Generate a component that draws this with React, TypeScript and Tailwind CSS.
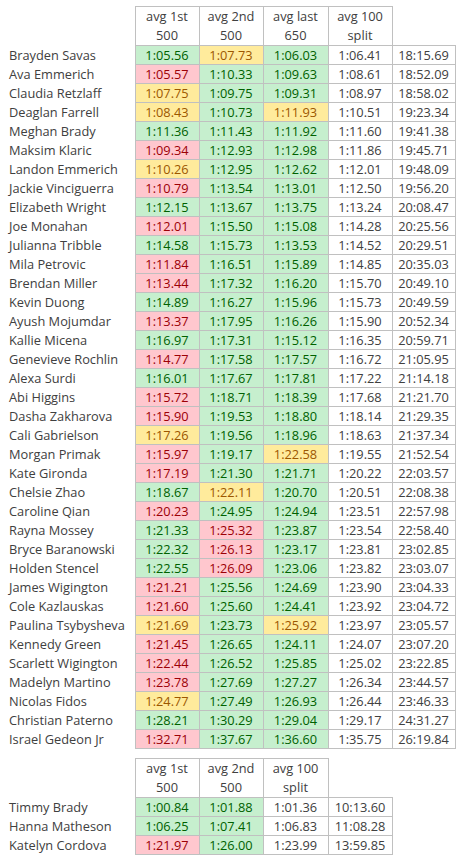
type Tone = 'g' | 'y' | 'r'

const tones: Record<Tone, string> = {
  g: 'bg-[#c6efce] text-[#006100]',
  y: 'bg-[#ffeb9c] text-[#9c5700]',
  r: 'bg-[#ffc7ce] text-[#9c0006]',
}

// name, [time, tone] x3, avg split, final
const mainRows: [string, string, Tone, string, Tone, string, Tone, string, string][] = [
  ['Brayden Savas', '1:05.56', 'g', '1:07.73', 'y', '1:06.03', 'g', '1:06.41', '18:15.69'],
  ['Ava Emmerich', '1:05.57', 'r', '1:10.33', 'g', '1:09.63', 'g', '1:08.61', '18:52.09'],
  ['Claudia Retzlaff', '1:07.75', 'y', '1:09.75', 'g', '1:09.31', 'g', '1:08.97', '18:58.02'],
  ['Deaglan Farrell', '1:08.43', 'y', '1:10.73', 'g', '1:11.93', 'y', '1:10.51', '19:23.34'],
  ['Meghan Brady', '1:11.36', 'g', '1:11.43', 'g', '1:11.92', 'g', '1:11.60', '19:41.38'],
  ['Maksim Klaric', '1:09.34', 'r', '1:12.93', 'g', '1:12.98', 'g', '1:11.86', '19:45.71'],
  ['Landon Emmerich', '1:10.26', 'y', '1:12.95', 'g', '1:12.62', 'g', '1:12.01', '19:48.09'],
  ['Jackie Vinciguerra', '1:10.79', 'r', '1:13.54', 'g', '1:13.01', 'g', '1:12.50', '19:56.20'],
  ['Elizabeth Wright', '1:12.15', 'g', '1:13.67', 'g', '1:13.75', 'g', '1:13.24', '20:08.47'],
  ['Joe Monahan', '1:12.01', 'r', '1:15.50', 'g', '1:15.08', 'g', '1:14.28', '20:25.56'],
  ['Julianna Tribble', '1:14.58', 'g', '1:15.73', 'g', '1:13.53', 'g', '1:14.52', '20:29.51'],
  ['Mila Petrovic', '1:11.84', 'r', '1:16.51', 'g', '1:15.89', 'g', '1:14.85', '20:35.03'],
  ['Brendan Miller', '1:13.44', 'r', '1:17.32', 'g', '1:16.20', 'g', '1:15.70', '20:49.10'],
  ['Kevin Duong', '1:14.89', 'g', '1:16.27', 'g', '1:15.96', 'g', '1:15.73', '20:49.59'],
  ['Ayush Mojumdar', '1:13.37', 'r', '1:17.95', 'g', '1:16.26', 'g', '1:15.90', '20:52.34'],
  ['Kallie Micena', '1:16.97', 'g', '1:17.31', 'g', '1:15.12', 'g', '1:16.35', '20:59.71'],
  ['Genevieve Rochlin', '1:14.77', 'r', '1:17.58', 'g', '1:17.57', 'g', '1:16.72', '21:05.95'],
  ['Alexa Surdi', '1:16.01', 'g', '1:17.67', 'g', '1:17.81', 'g', '1:17.22', '21:14.18'],
  ['Abi Higgins', '1:15.72', 'r', '1:18.71', 'g', '1:18.39', 'g', '1:17.68', '21:21.70'],
  ['Dasha Zakharova', '1:15.90', 'r', '1:19.53', 'g', '1:18.80', 'g', '1:18.14', '21:29.35'],
  ['Cali Gabrielson', '1:17.26', 'y', '1:19.56', 'g', '1:18.96', 'g', '1:18.63', '21:37.34'],
  ['Morgan Primak', '1:15.97', 'r', '1:19.17', 'g', '1:22.58', 'y', '1:19.55', '21:52.54'],
  ['Kate Gironda', '1:17.19', 'r', '1:21.30', 'g', '1:21.71', 'g', '1:20.22', '22:03.57'],
  ['Chelsie Zhao', '1:18.67', 'g', '1:22.11', 'y', '1:20.70', 'g', '1:20.51', '22:08.38'],
  ['Caroline Qian', '1:20.23', 'r', '1:24.95', 'g', '1:24.94', 'g', '1:23.51', '22:57.98'],
  ['Rayna Mossey', '1:21.33', 'g', '1:25.32', 'r', '1:23.87', 'g', '1:23.54', '22:58.40'],
  ['Bryce Baranowski', '1:22.32', 'g', '1:26.13', 'r', '1:23.17', 'g', '1:23.81', '23:02.85'],
  ['Holden Stencel', '1:22.55', 'g', '1:26.09', 'r', '1:23.06', 'g', '1:23.82', '23:03.07'],
  ['James Wigington', '1:21.21', 'r', '1:25.56', 'g', '1:24.69', 'g', '1:23.90', '23:04.33'],
  ['Cole Kazlauskas', '1:21.60', 'r', '1:25.60', 'g', '1:24.41', 'g', '1:23.92', '23:04.72'],
  ['Paulina Tsybysheva', '1:21.69', 'y', '1:23.73', 'g', '1:25.92', 'y', '1:23.97', '23:05.57'],
  ['Kennedy Green', '1:21.45', 'r', '1:26.65', 'g', '1:24.11', 'g', '1:24.07', '23:07.20'],
  ['Scarlett Wigington', '1:22.44', 'r', '1:26.52', 'g', '1:25.85', 'g', '1:25.02', '23:22.85'],
  ['Madelyn Martino', '1:23.78', 'r', '1:27.69', 'g', '1:27.27', 'g', '1:26.34', '23:44.57'],
  ['Nicolas Fidos', '1:24.77', 'y', '1:27.49', 'g', '1:26.93', 'g', '1:26.44', '23:46.33'],
  ['Christian Paterno', '1:28.21', 'g', '1:30.29', 'g', '1:29.04', 'g', '1:29.17', '24:31.27'],
  ['Israel Gedeon Jr', '1:32.71', 'r', '1:37.67', 'g', '1:36.60', 'g', '1:35.75', '26:19.84'],
]

const shortRows: [string, string, Tone, string, Tone, string, string][] = [
  ['Timmy Brady', '1:00.84', 'g', '1:01.88', 'g', '1:01.36', '10:13.60'],
  ['Hanna Matheson', '1:06.25', 'g', '1:07.41', 'g', '1:06.83', '11:08.28'],
  ['Katelyn Cordova', '1:21.97', 'r', '1:26.00', 'g', '1:23.99', '13:59.85'],
]

const cell = 'border border-[#c0c0c0] text-center p-0 h-[19px] leading-[18px]'
const head = 'border border-[#c0c0c0] text-center font-normal p-0 leading-[19px] align-top'

const Header = ({ labels }: { labels: [string, string][] }) => (
  <tr className="h-[38px]">
    <th className="p-0"></th>
    {labels.map(([a, b]) => (
      <th key={a + b} className={head}>
        {a}
        <br />
        {b}
      </th>
    ))}
    <th className="p-0"></th>
  </tr>
)

const App = () => {
  return (
    <div className="bg-white w-[458px] h-[859px] pt-[6px] text-[12.8px] text-[#404040] font-['Open_Sans',sans-serif] overflow-hidden">
      <table className="border-collapse table-fixed">
        <colgroup>
          <col className="w-[135px]" />
          <col className="w-[64px]" />
          <col className="w-[64px]" />
          <col className="w-[65px]" />
          <col className="w-[64px]" />
          <col className="w-[63px]" />
        </colgroup>
        <thead>
          <Header labels={[['avg 1st', '500'], ['avg 2nd', '500'], ['avg last', '650'], ['avg 100', 'split']]} />
        </thead>
        <tbody>
          {mainRows.map(r => (
            <tr key={r[0]}>
              <td className="p-0 pl-[9px] h-[19px] leading-[18px] whitespace-nowrap">{r[0]}</td>
              <td className={`${cell} ${tones[r[2]]}`}>{r[1]}</td>
              <td className={`${cell} ${tones[r[4]]}`}>{r[3]}</td>
              <td className={`${cell} ${tones[r[6]]}`}>{r[5]}</td>
              <td className={cell}>{r[7]}</td>
              <td className={cell}>{r[8]}</td>
            </tr>
          ))}
        </tbody>
      </table>

      <table className="border-collapse table-fixed mt-[9px]">
        <colgroup>
          <col className="w-[135px]" />
          <col className="w-[64px]" />
          <col className="w-[64px]" />
          <col className="w-[65px]" />
          <col className="w-[64px]" />
        </colgroup>
        <thead>
          <Header labels={[['avg 1st', '500'], ['avg 2nd', '500'], ['avg 100', 'split']]} />
        </thead>
        <tbody>
          {shortRows.map(r => (
            <tr key={r[0]}>
              <td className="p-0 pl-[9px] h-[19px] leading-[18px] whitespace-nowrap">{r[0]}</td>
              <td className={`${cell} ${tones[r[2]]}`}>{r[1]}</td>
              <td className={`${cell} ${tones[r[4]]}`}>{r[3]}</td>
              <td className={cell}>{r[5]}</td>
              <td className={cell}>{r[6]}</td>
            </tr>
          ))}
        </tbody>
      </table>
    </div>
  )
}

export default App
